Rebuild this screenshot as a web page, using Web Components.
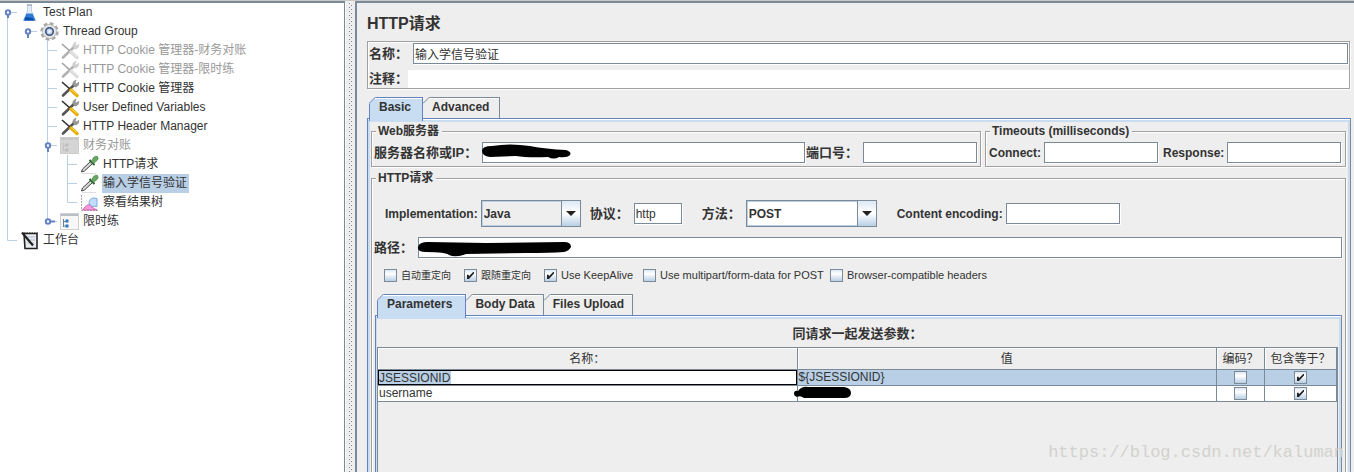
<!DOCTYPE html>
<html lang="zh-CN">
<head>
<meta charset="utf-8">
<title>Apache JMeter</title>
<style>
  html, body { margin: 0; }
  body {
    min-height: 100vh; display: flex; overflow: hidden; position: relative;
    background: #eee; color: #333;
    font: 12px/16px "Liberation Sans", "Noto Sans CJK SC", sans-serif;
  }
  jm-split { flex: 1; }
  .title { margin: 0 0 7px; font-size: 16px; line-height: 20px; }
  .meta { border: 1px solid #a0a0a0; box-shadow: 1px 1px 0 #fff, inset 1px 1px 0 #fff; padding: 1px 0 0 1px; margin: 0 1px 8px 0; }
  .meta jm-field:first-child { margin-right: 1px; }
  .meta jm-field + jm-field { margin-top: 6px; }
  .row { display: flex; align-items: center; }
  .servers { display: flex; gap: 4px; margin-bottom: 3px; }
  .servers jm-group:first-child { flex: 1; }
  .servers jm-group:last-child { width: 361px; }
  .grow { flex: 1; }
  .request { flex: 1; }
  .impl { padding: 14px 0 10px 11px; gap: 20px; }
  .near { gap: 9px; }
  .checks { display: grid; grid-template-columns: 80px 80px 99px 187px auto; padding: 11px 0 12px 10px; }
  .params { margin-left: 1px; }
  .caption { margin: 0; text-align: center; font-size: 13px; line-height: 16px; padding: 7px 0 5px; }
</style>
</head>
<body>

<template id="t-split">
  <style>
    :host { display: flex; border-top: 1px solid #c9c9c9; }
    .left { width: 344px; flex: none; background: #fff; border-top: 2px solid #7a8a99; border-right: 1px solid #7a8a99; }
    .bar { width: 10px; flex: none; box-sizing: border-box; margin-top: 2px; padding-left: 2px; display: flex; box-shadow: inset 1px 0 0 #fff; }
    .bar svg { width: 8px; height: 100%; }
    .right { flex: 1; min-width: 0; display: flex; flex-direction: column; border-left: 2px solid #7a8a99; border-top: 2px solid #7a8a99; padding: 11px 3px 0 10px; }
  </style>
  <nav class="left"><slot name="left"></slot></nav>
  <div class="bar">
    <svg aria-hidden="true"><defs><pattern id="d" width="4" height="4" patternUnits="userSpaceOnUse"><path fill="#7a8a99" d="M2 0h1v1h-1zM0 2h1v1h-1z"/></pattern></defs><rect x="2" width="3" height="100%" fill="url(#d)"/></svg>
  </div>
  <main class="right"><slot></slot></main>
</template>

<template id="t-node">
  <style>
    :host { display: flex; height: 19px; align-items: center; white-space: nowrap; }
    svg { display: block; flex: none; }
    .text { margin-left: 2px; padding: 0 2px 0 1px; height: 19px; line-height: 19px; }
    :host([disabled]) .text { color: #999; }
    :host([disabled]) .icon { filter: grayscale(1); opacity: .45; }
    :host([selected]) .text { background: #b8cfe5; }
  </style>
  <span class="guides" style="display:flex"></span><span class="icon"></span><span class="text"><slot></slot></span>
</template>

<template id="t-field">
  <style>
    :host { display: flex; align-items: center; font-weight: bold; }
    :host([cjk]) { font-size: 13px; }
    label { white-space: nowrap; margin-right: 3px; }
    :host([cjk]) label { margin-right: 5px; }
    .box { position: relative; display: flex; }
    :host(:not([width])) .box { flex: 1; }
    input {
      flex: 1; width: 100%; min-width: 0; box-sizing: border-box; height: 21px; margin: 0; padding: 0 1px; border: 1px solid #7a8a99;
      background: #fff; color: #333; font: 12px "Liberation Sans", "Noto Sans CJK SC", sans-serif; outline: 0; border-radius: 0; box-shadow: 1px 1px 0 #fff;
    }
    :host([plain]) label { margin-right: 0; }
    :host([plain]) input { border: 0; height: 18px; box-shadow: none; }
    svg { position: absolute; left: -2px; top: 0; width: 156px; height: 21px; pointer-events: none; }
  </style>
  <label for="f"></label><span class="box"><input id="f" type="text"></span>
</template>

<template id="t-combo">
  <style>
    :host { display: flex; align-items: center; font-weight: bold; }
    :host([cjk]) { font-size: 13px; }
    label { white-space: nowrap; margin-right: 3px; }
    :host([cjk]) label { margin-right: 5px; }
    .box { position: relative; }
    select {
      appearance: none; display: block; width: 100%; height: 27px; margin: 0; padding: 0 20px 0 2px; color: #333; background: #fff;
      border: 1px solid #7a8a99; border-radius: 0; box-shadow: inset 0 0 0 1px #b8cfe5; font: bold 12px "Liberation Sans", sans-serif; outline: 0;
    }
    :host([readonly]) select { background: #eee; }
    .arrow {
      position: absolute; right: 1px; top: 1px; bottom: 1px; width: 18px; border-left: 1px solid #7a8a99; pointer-events: none;
      background: linear-gradient(#dde8f3 0, #fff 45%, #fff 50%, #b8cfe5 100%); display: flex; align-items: center; justify-content: center;
    }
  </style>
  <label for="c"></label>
  <span class="box"><select id="c"></select><span class="arrow"><svg width="10" height="5" aria-hidden="true"><path d="M0 0h10L5 5z" fill="#222"/></svg></span></span>
</template>

<template id="t-check">
  <style>
    :host { display: inline-flex; font-size: 11px; line-height: 13px; vertical-align: top; }
    :host([cjk]) { font-size: 10px; }
    label { display: flex; align-items: center; white-space: nowrap; }
    input {
      appearance: none; width: 13px; height: 13px; margin: 0; border: 1px solid #7a8a99; position: relative; flex: none;
      background: linear-gradient(#dde8f3 0, #fff 35%, #b8cfe5 100%);
    }
    input:checked::after { content: ""; position: absolute; inset: 2px; background: #222; clip-path: polygon(0 38%, 24% 38%, 28% 62%, 88% 0, 100% 0, 100% 22%, 28% 100%, 0 100%); }
    .t:not([hidden]) { margin-left: 4px; }
  </style>
  <label><input type="checkbox"><span class="t"><slot></slot></span></label>
</template>

<template id="t-group">
  <style>
    :host { display: flex; }
    fieldset { flex: 1; min-width: 0; margin: 0; padding: 0 3px 3px 2px; border: 1px solid #a0a0a0; box-shadow: 1px 1px 0 #fff, inset 1px 1px 0 #fff; }
    legend { margin-left: 2px; padding: 0 3px 0 2px; background: #eee; font-weight: bold; height: 16px; line-height: 16px; }
    .body { display: flex; padding-top: 3px; }
    :host([open]) fieldset { display: flex; flex-direction: column; border-bottom: 0; padding-bottom: 0; }
    :host([open]) .body { flex: 1; flex-direction: column; padding-top: 0; }
  </style>
  <fieldset><legend></legend><div class="body"><slot></slot></div></fieldset>
</template>

<template id="t-tabs">
  <style>
    :host { display: flex; flex-direction: column; flex: 1; }
    .tabs { display: flex; padding-left: 2px; height: 21px; }
    button {
      position: relative; height: 21px; margin: 0; padding: 0 10px 2px 9px; border: 1px solid #7a8a99; border-bottom: 0; border-left: 0; border-radius: 0;
      background: #eee; color: #333; font: bold 12px/16px "Liberation Sans", sans-serif; box-shadow: inset 0 1px 0 #fff;
    }
    :host([dense]) button { padding-right: 8px; }
    button svg { position: absolute; left: 0; top: -1px; }
    button.on { height: 24px; padding: 0 11px 5px 9px; border-color: #6382bf; border-left: 1px solid #6382bf; background: #c8ddf2; z-index: 1; }
    :host([dense]) button.on { padding-right: 13px; }
    button.on svg { left: -1px; }
    .panel { flex: 1; display: flex; border: 1px solid #6382bf; border-bottom: 0; border-right-color: #7a8a99; box-shadow: inset 0 1px 0 #fff; }
    .inner { flex: 1; min-width: 0; margin-top: 1px; border: 2px solid #c8ddf2; border-bottom: 0; padding: 1px 2px 0 1px; display: flex; flex-direction: column; }
    :host([dense]) .inner { border-left-width: 1px; padding: 0 1px 0 0; }
  </style>
  <div class="tabs" role="tablist"></div>
  <div class="panel" role="tabpanel"><div class="inner"><slot></slot></div></div>
</template>

<template id="t-table">
  <style>
    :host { display: block; flex: 1; border: 1px solid #7a8a99; border-bottom: 0; }
    table { width: 100%; border-collapse: separate; border-spacing: 0; table-layout: fixed; }
    th, td { padding: 0; border: 0 solid #7a8a99; border-width: 0 1px 1px 0; overflow: hidden; }
    th { height: 21px; font-weight: normal; box-shadow: inset 1px 1px 0 #fff; }
    td { height: 15px; line-height: 15px; background: #fff; }
    td.v { padding-left: 1px; overflow: visible; position: relative; }
    tr.sel td { background: #b8cfe5; }
    td.c { text-align: center; line-height: 0; }
    input.edit {
      display: block; box-sizing: border-box; width: 100%; height: 15px; margin: 0; padding: 0; border: 1px solid #000; outline: 0; color: #333;
      background: linear-gradient(#b8cfe5, #b8cfe5) 0 0 / 72px 100% no-repeat #fff; font: 12px/13px "Liberation Sans", sans-serif;
    }
    svg { position: absolute; left: -4px; top: 0; pointer-events: none; }
  </style>
  <table>
    <colgroup><col><col><col style="width:48px"><col style="width:72px"></colgroup>
    <thead><tr><th scope="col">名称：</th><th scope="col">值</th><th scope="col">编码？</th><th scope="col">包含等于？</th></tr></thead>
    <tbody>
      <tr class="sel"><td><input class="edit" value="JSESSIONID" aria-label="名称"></td><td class="v">${JSESSIONID}</td><td class="c"><jm-check></jm-check></td><td class="c"><jm-check checked></jm-check></td></tr>
      <tr><td class="v">username</td><td class="v"><svg width="58" height="13" aria-hidden="true"><path d="M0 8Q0 4 4 5Q8 0 14 1L50 1Q57 2 57 7Q57 12 50 12L10 12Q6 9 3 11Q0 10 0 8Z"/></svg></td><td class="c"><jm-check></jm-check></td><td class="c"><jm-check checked></jm-check></td></tr>
    </tbody>
  </table>
</template>

<template id="t-mark">
  <style>
    :host { position: absolute; right: 10px; bottom: 8px; font: 17px/22px "Liberation Mono", monospace; color: #d2d2cd; pointer-events: none; }
  </style>
  <slot></slot>
</template>

<jm-split>
  <div slot="left" role="tree">
    <jm-node guides="A" icon="flask">Test Plan</jm-node>
    <jm-node guides="vO" icon="gear">Thread Group</jm-node>
    <jm-node guides="v-t" icon="tools" disabled>HTTP Cookie 管理器-财务对账</jm-node>
    <jm-node guides="v-t" icon="tools" disabled>HTTP Cookie 管理器-限时练</jm-node>
    <jm-node guides="v-t" icon="tools">HTTP Cookie 管理器</jm-node>
    <jm-node guides="v-t" icon="tools">User Defined Variables</jm-node>
    <jm-node guides="v-t" icon="tools">HTTP Header Manager</jm-node>
    <jm-node guides="v-M" icon="shade" disabled>财务对账</jm-node>
    <jm-node guides="v-vt" icon="dropper">HTTP请求</jm-node>
    <jm-node guides="v-vt" icon="dropper" selected>输入学信号验证</jm-node>
    <jm-node guides="v-ve" icon="chart">察看结果树</jm-node>
    <jm-node guides="v-C" icon="folder">限时练</jm-node>
    <jm-node guides="e" icon="bench">工作台</jm-node>
  </div>

  <h1 class="title">HTTP请求</h1>
  <div class="meta">
    <jm-field cjk label="名称：" value="输入学信号验证"></jm-field>
    <jm-field cjk plain label="注释："></jm-field>
  </div>

  <jm-tabs tabs="Basic,Advanced">
    <div class="servers">
      <jm-group label="Web服务器">
        <jm-field class="grow" cjk label="服务器名称或IP：" redact="short"></jm-field>
        <jm-field cjk label="端口号：" width="114" style="margin-left:1px"></jm-field>
      </jm-group>
      <jm-group label="Timeouts (milliseconds)">
        <jm-field label="Connect:" width="114" style="margin:0 5px 0 1px"></jm-field>
        <jm-field label="Response:" width="114"></jm-field>
      </jm-group>
    </div>
    <jm-group class="request" open label="HTTP请求">
      <div class="row impl">
        <div class="row near">
          <jm-combo readonly label="Implementation:" value="Java" width="100"></jm-combo>
          <jm-field cjk label="协议：" value="http" width="48"></jm-field>
        </div>
        <jm-combo cjk label="方法：" value="POST" width="131"></jm-combo>
        <jm-field label="Content encoding:" width="114"></jm-field>
      </div>
      <jm-field cjk label="路径：" redact="long"></jm-field>
      <div class="checks">
        <jm-check cjk>自动重定向</jm-check>
        <jm-check cjk checked>跟随重定向</jm-check>
        <jm-check checked>Use KeepAlive</jm-check>
        <jm-check>Use multipart/form-data for POST</jm-check>
        <jm-check>Browser-compatible headers</jm-check>
      </div>
      <jm-tabs class="params" dense tabs="Parameters,Body Data,Files Upload">
        <h2 class="caption">同请求一起发送参数：</h2>
        <jm-table></jm-table>
      </jm-tabs>
    </jm-group>
  </jm-tabs>
</jm-split>
<jm-mark>https://blog.csdn.net/kaluman</jm-mark>

<script>
const L = 'stroke="#b8cfe5" fill="none"';
const H = 'stroke="#6382bf" stroke-width="2" fill="#fff"';
// Tree guide cells, 20 x 19 each, joined edge to edge.
const GUIDES = {
  '-': '',
  v: `<path d="M7.500 0V19" ${L}/>`,
  t: `<path d="M7.500 0V19M7.500 9.500H17" ${L}/>`,
  e: `<path d="M7.500 0V9.500H17" ${L}/>`,
  A: `<path d="M7.500 9V19M7 9.500H17" ${L}/><path d="M8 11V15" ${H}/><circle cx="8" cy="9.500" r="2.200" ${H}/>`,
  O: `<path d="M7 9.500H17" ${L}/><path d="M8 11V16" ${H}/><circle cx="8" cy="9.500" r="2.200" ${H}/>`,
  M: `<path d="M7.500 0V19M7 9.500H17" ${L}/><path d="M8 11V16" ${H}/><circle cx="8" cy="9.500" r="2.200" ${H}/>`,
  C: `<path d="M7.500 0V9M7 9.500H17" ${L}/><path d="M9 9.500H15" ${H}/><circle cx="8" cy="9.500" r="2.200" ${H}/>`
};
const TREE_MARK = '<path d="M3.500 7v8M4 9.500h2M4 14h2" stroke="#6c7c90"/><path d="M5.500 7.500h3v3h-3zM5.500 12.500h3v3h-3z" fill="#2f7cc4"/>';
const ICONS = {
  flask: '<path d="M7.500 2h4v6l4 9.500h-12l4-9.500z" fill="#e3edf7" stroke="#a8bfd6" stroke-width=".7"/><path d="M6.500 10.500h6l3 7h-12z" fill="#2f7cd6"/><path d="M5.500 14l7 1 2 2.500h-10z" fill="#0b4fae"/><path d="M7 2h5" stroke="#8d9aa8"/>',
  gear: '<circle cx="9.500" cy="9.500" r="8" fill="none" stroke="#a6a6a6" stroke-width="2.400" stroke-dasharray="3.800 2.480"/><circle cx="9.500" cy="9.500" r="7" fill="#e6e6e6" stroke="#aaa" stroke-width=".8"/><circle cx="9.500" cy="9.500" r="3.800" fill="#b9cfee" stroke="#3d5580" stroke-width="1.600"/><path d="M8.500 7.500l3 2-3 2z" fill="#fff"/>',
  tools: '<path d="M3 16.500L14 6" stroke="#555" stroke-width="2.600" stroke-linecap="round"/><path d="M13 6.500q-1-4 3-5.500l-1 3 2 1 1.500-2q1 4-3 5z" fill="#999" stroke="#777" stroke-width=".5"/><path d="M2 3l9 8" stroke="#333" stroke-width="1.600"/><path d="M11 11l6 5.500" stroke="#e6ad00" stroke-width="3.400" stroke-linecap="round"/><path d="M11 10.500l6 5" stroke="#ffdc4d" stroke-width="1"/>',
  folder: '<rect x=".5" y="1.500" width="18" height="16" fill="#f7f7f7" stroke="#d0d0d0"/><path d="M1 2h17v2H1z" fill="#b9bec6"/>' + TREE_MARK,
  shade: '<rect x=".5" y="1.500" width="18" height="16" fill="#a4a4a4" stroke="#909090"/><path d="M1 2h17v2H1z" fill="#888"/>' + TREE_MARK,
  dropper: '<path d="M1.500 17l1-3L11 6l2 2-8.500 8z" fill="#d5d5d5" stroke="#444"/><path d="M9.500 5l5 5" stroke="#255e2b" stroke-width="2"/><path d="M11.500 6.500l2-4q2-2 4-1 1.500 2-.500 4l-3.500 3z" fill="#69a765" stroke="#397a3b" stroke-width=".6"/><path d="M2 18.500h14" stroke="#ddd"/>',
  chart: '<rect x="1.500" y="1.500" width="16" height="16" fill="#fbfbfb"/><path d="M1.500 2v15.500H18" fill="none" stroke="#aaa" stroke-dasharray="2 1"/><path d="M9 11q0-6 5-6l3 .500v8q-5 1-8-2.500z" fill="#c3dcfa" stroke="#6a9ed8" stroke-width=".8"/><path d="M2.500 17q3-4 5-5 2-1 3.500 1.500l3 2 3 1.500z" fill="#f49ad8" stroke="#cc4fae" stroke-width=".8"/>',
  bench: '<path d="M4 2.500h13v15H5z" fill="#e9edf2" stroke="#222" stroke-width="1.600"/><path d="M7 6h8M7 9h8M7 12h7" stroke="#b4bdc8"/><path d="M2 1.500l11 13" stroke="#222" stroke-width="2.200"/><path d="M4 1.500h14" stroke="#777" stroke-dasharray="1.500 1"/>'
};
const REDACT = {
  short: '<path d="M2 9Q2 4 12 4Q30 1 50 4Q66 7 86 8Q92 10 90 13Q87 16 79 15Q74 18 68 15Q48 16 36 14L10 15Q2 14 2 9Z"/>',
  long: '<path d="M2 10Q3 5 12 5L70 6L148 5Q155 5 155 10Q153 14 148 15Q134 16 110 16L50 17Q40 21 33 18Q30 15 10 15Q1 15 2 10Z"/>'
};
const svg = (w, inner) => `<svg width="${w}" height="19" viewBox="0 0 ${w} 19" aria-hidden="true">${inner}</svg>`;

class Base extends HTMLElement {
  constructor() {
    super();
    this.attachShadow({ mode: 'open' }).append(document.getElementById(this.constructor.tpl).content.cloneNode(true));
  }
  $(s) { return this.shadowRoot.querySelector(s); }
  attr(n) { return this.getAttribute(n) || ''; }
}
class Split extends Base { static tpl = 't-split'; }
class Mark extends Base { static tpl = 't-mark'; }
class Table extends Base { static tpl = 't-table'; }
class TreeNode extends Base {
  static tpl = 't-node';
  connectedCallback() {
    this.setAttribute('role', 'treeitem');
    this.$('.guides').innerHTML = [...this.attr('guides')].map(g => svg(20, GUIDES[g])).join('');
    this.$('.icon').innerHTML = svg(20, ICONS[this.attr('icon')]);
  }
}
class Field extends Base {
  static tpl = 't-field';
  connectedCallback() {
    this.$('label').textContent = this.attr('label');
    this.$('input').value = this.attr('value');
    if (this.attr('width')) this.$('.box').style.width = this.attr('width') + 'px';
    if (this.attr('redact')) this.$('.box').insertAdjacentHTML('beforeend', `<svg aria-hidden="true">${REDACT[this.attr('redact')]}</svg>`);
  }
}
class Combo extends Base {
  static tpl = 't-combo';
  connectedCallback() {
    this.$('label').textContent = this.attr('label');
    this.$('select').add(new Option(this.attr('value')));
    this.$('.box').style.width = this.attr('width') + 'px';
  }
}
class Check extends Base {
  static tpl = 't-check';
  connectedCallback() {
    this.$('input').checked = this.hasAttribute('checked');
    this.$('.t').hidden = !this.textContent;
  }
}
class Group extends Base {
  static tpl = 't-group';
  connectedCallback() { this.$('legend').textContent = this.attr('label'); }
}
class Tabs extends Base {
  static tpl = 't-tabs';
  connectedCallback() {
    this.attr('tabs').split(',').forEach((name, i) => {
      const b = document.createElement('button');
      b.type = 'button';
      b.setAttribute('role', 'tab');
      b.setAttribute('aria-selected', String(i === 0));
      if (i === 0) b.className = 'on';
      b.innerHTML = `<svg width="7" height="7" aria-hidden="true"><path d="M0 0H7L0 7z" fill="#eee"/><path d="M0 6.500L6.500 0" stroke="${i ? '#7a8a99' : '#6382bf'}"/></svg>`;
      b.append(name);
      this.$('.tabs').append(b);
    });
  }
}
customElements.define('jm-split', Split);
customElements.define('jm-node', TreeNode);
customElements.define('jm-field', Field);
customElements.define('jm-combo', Combo);
customElements.define('jm-check', Check);
customElements.define('jm-group', Group);
customElements.define('jm-tabs', Tabs);
customElements.define('jm-table', Table);
customElements.define('jm-mark', Mark);
</script>
</body>
</html>
